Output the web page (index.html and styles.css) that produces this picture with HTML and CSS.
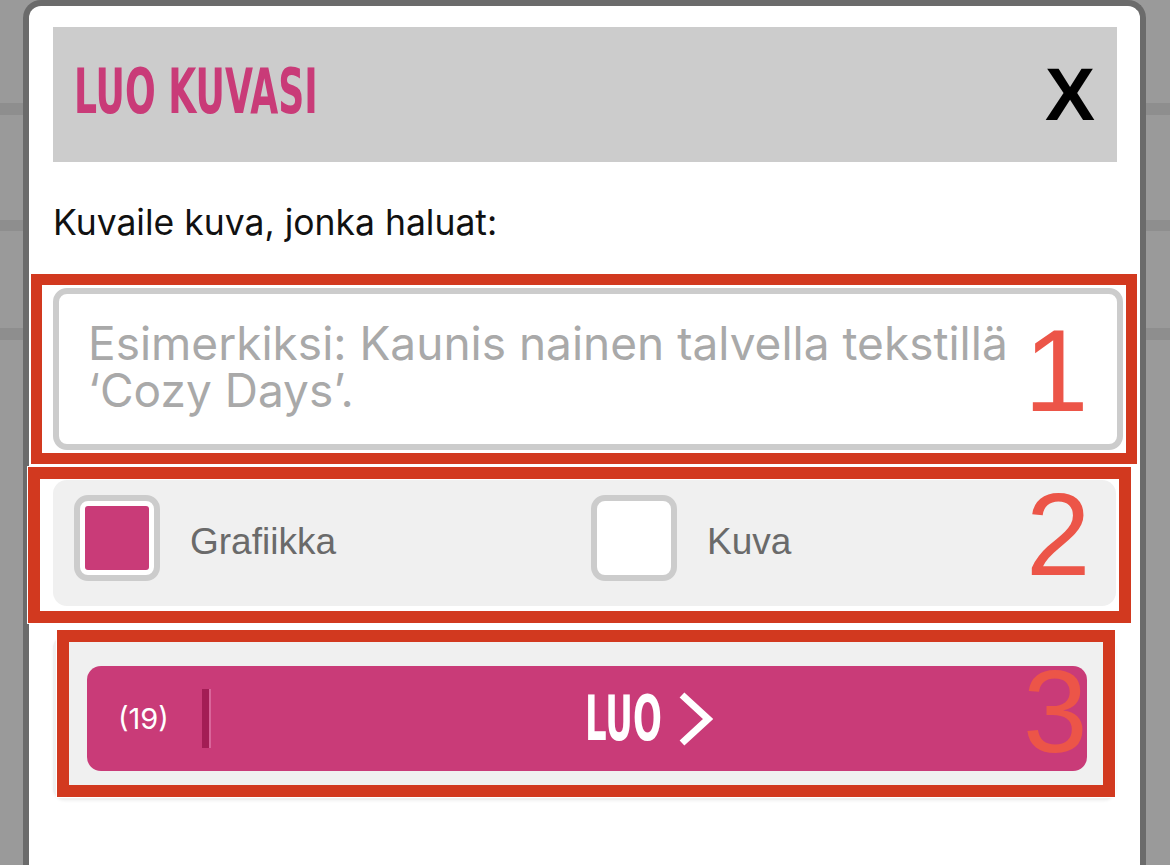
FILE: index.html
```html
<!DOCTYPE html>
<html lang="fi">
<head>
<meta charset="utf-8">
<title>Luo kuvasi</title>
<link rel="stylesheet" href="styles.css">
</head>
<body>
<div class="page">
  <div class="modal">
    <div class="modal-head">
      <h1 class="title"><span class="condensed">LUO KUVASI</span></h1>
      <button class="close" type="button">X</button>
    </div>
    <label class="prompt-label" for="prompt">Kuvaile kuva, jonka haluat:</label>
    <textarea id="prompt" class="prompt" placeholder="Esimerkiksi: Kaunis nainen talvella tekstillä ‘Cozy Days’."></textarea>
    <div class="options">
      <div class="option"><span class="check is-checked"></span><span class="option-text">Grafiikka</span></div>
      <div class="option"><span class="check"></span><span class="option-text">Kuva</span></div>
    </div>
    <div class="actions">
      <button class="create" type="button">
        <span class="credits">(19)</span>
        <span class="divider"></span>
        <span class="create-label">
          <span class="create-text condensed">LUO</span>
          <svg class="chevron" width="34" height="54" viewBox="0 0 34 54"><polyline points="3,3 29,27 3,51" fill="none" stroke="#fff" stroke-width="7"/></svg>
        </span>
      </button>
    </div>

    <div class="mark mark-1"></div>
    <div class="mark mark-2"></div>
    <div class="mark mark-3"></div>
    <span class="num num-1">1</span>
    <span class="num num-2">2</span>
    <span class="num num-3">3</span>
  </div>
</div>
</body>
</html>
```

FILE: styles.css
```css
html, body {
  margin: 0;
  height: 865px;
  overflow: hidden;
}
body {
  font-family: "Inter", "DejaVu Sans", sans-serif;
  background: linear-gradient(#9a9a9a 0 103px, #8e8e8e 103px 115px, #9a9a9a 115px 220px, #8e8e8e 220px 231px, #9a9a9a 231px 328px, #8e8e8e 328px 340px, #9a9a9a 340px);
}
.page {
  padding: 0 24px 0 23px;
}
.modal {
  position: relative;
  background: #fff;
  border: 6px solid #6b6b6b;
  border-bottom: none;
  border-radius: 18px 18px 0 0;
  padding: 21px 23px 80px 24px;
  min-height: 900px;
}
.condensed {
  display: inline-block;
  font-family: "DejaVu Sans Condensed", "DejaVu Sans", sans-serif;
  font-stretch: condensed;
  font-weight: 700;
  transform-origin: left center;
}
.modal-head {
  height: 135px;
  background: #cccccc;
  display: flex;
  align-items: center;
  justify-content: space-between;
  padding: 0 22px 0 21px;
}
.title {
  margin: 0 0 8px;
  font-size: 63px;
  line-height: 1;
  color: #c93b78;
  font-weight: 700;
}
.title .condensed {
  transform: scaleX(0.638);
}
.close {
  background: none;
  border: none;
  padding: 0;
  font-family: "Liberation Sans", Arial, sans-serif;
  font-weight: 700;
  font-size: 75px;
  line-height: 1;
  color: #000;
}
.prompt-label {
  display: block;
  margin-top: 41px;
  font-size: 35.5px;
  line-height: 40px;
  color: #111;
}
.prompt {
  display: block;
  box-sizing: border-box;
  width: calc(100% + 6px);
  height: 162px;
  margin-top: 45px;
  border: 6px solid #cccccc;
  border-radius: 14px;
  padding: 26px 79px 0 29px;
  font-family: "Inter", "DejaVu Sans", sans-serif;
  font-size: 46px;
  line-height: 47px;
  color: #333;
  resize: none;
  outline: none;
  background: #fff;
}
.prompt::placeholder {
  color: #a9a9a9;
  opacity: 1;
}
.options {
  margin-top: 30px;
  margin-right: 1px;
  height: 126px;
  box-sizing: border-box;
  background: #f0f0f0;
  border-radius: 14px;
  display: grid;
  grid-template-columns: 517px 1fr;
  align-items: center;
  padding: 15px 21px 25px;
}
.option {
  display: flex;
  align-items: center;
  gap: 30px;
}
.check {
  position: relative;
  width: 86px;
  height: 86px;
  box-sizing: border-box;
  border: 6px solid #cccccc;
  border-radius: 14px;
  background: #fff;
}
.check.is-checked::after {
  content: "";
  position: absolute;
  inset: 5px;
  background: #c93b78;
  border-radius: 3px;
}
.option-text {
  margin-top: 8px;
  font-family: "Liberation Sans", Arial, sans-serif;
  font-size: 37px;
  color: #6a6a6a;
}
.actions {
  margin-top: 30px;
  margin-right: 1px;
  background: #f0f0f0;
  border-radius: 12px;
  padding: 30px 29px 29px 34px;
  box-shadow: 0 1px 3px rgba(0, 0, 0, 0.06);
}
.create {
  width: 100%;
  height: 105px;
  border: none;
  border-radius: 14px;
  background: #c93b78;
  color: #fff;
  display: flex;
  align-items: center;
  padding: 0 0 0 31px;
  font-family: "Inter", "DejaVu Sans", sans-serif;
}
.credits {
  font-size: 29px;
  line-height: 1;
}
.divider {
  width: 9px;
  height: 59px;
  margin-left: 33px;
  background: linear-gradient(to right, #a31d55 0 7px, #d9659a 7px);
}
.create-label {
  flex: 1;
  display: flex;
  justify-content: center;
  align-items: center;
  gap: 15px;
}
.create-text {
  font-size: 63px;
  line-height: 1;
  transform: scaleX(0.6);
  margin-right: -50px;
}
.chevron {
  display: block;
}
.mark {
  position: absolute;
  box-sizing: border-box;
  border: 12px solid #d2391f;
  outline: 1px solid #fff;
}
.mark-1 {
  left: 2px;
  top: 268px;
  width: 1106px;
  height: 190px;
  border-width: 11px;
}
.mark-2 {
  left: -1px;
  top: 461px;
  width: 1103px;
  height: 156px;
}
.mark-3 {
  left: 28px;
  top: 624px;
  width: 1058px;
  height: 167px;
}
.num {
  position: absolute;
  font-family: "Liberation Sans", Arial, sans-serif;
  font-size: 116px;
  line-height: 1;
  color: #ec5548;
}
.num-1 { left: 995px; top: 307px; }
.num-2 { left: 997px; top: 471px; }
.num-3 { left: 994px; top: 648px; }
```
